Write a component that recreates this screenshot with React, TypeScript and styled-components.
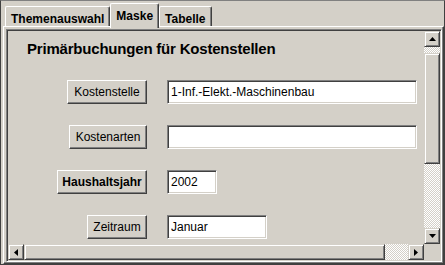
import React from "react";
import styled, { createGlobalStyle } from "styled-components";

const BG = "#d4d0c8";
const FONT = `"Liberation Sans", Arial, sans-serif`;

const Global = createGlobalStyle`
  html, body { margin: 0; padding: 0; background: ${BG}; }
  body { font-family: ${FONT}; }
`;

const Window = styled.div`
  box-sizing: border-box;
  width: 445px;
  height: 265px;
  background: ${BG};
  border: 1px solid #404040;
  border-top-color: #808080;
  padding: 1px 0 0 2px;
  display: flex;
  flex-direction: column;
  overflow: hidden;
`;

const TabStrip = styled.div`
  flex: none;
  height: 24px;
  display: flex;
  align-items: flex-end;
  padding-left: 2px;
  position: relative;
  z-index: 1;
`;

const Tab = styled.div<{ $active?: boolean }>`
  box-sizing: border-box;
  height: ${(p) => (p.$active ? 25 : 20)}px;
  margin-bottom: ${(p) => (p.$active ? -2 : 0)}px;
  padding: 5px 5px 0;
  font: bold 12px/14px ${FONT};
  color: #000;
  white-space: nowrap;
  background: ${BG};
  border-left: 1px solid #fff;
  border-top: 1px solid #fff;
  border-right: 1px solid #404040;
  box-shadow: inset -1px 0 #808080;
  border-radius: 2px 2px 0 0;
`;

const Panel = styled.div`
  flex: 1;
  min-height: 0;
  display: flex;
  border: 1px solid;
  border-color: #fff #404040 #404040 #fff;
  box-shadow: inset -1px -1px #808080;
  padding: 2px 1px 1px 2px;
`;

const ScrollPane = styled.div`
  flex: 1;
  min-width: 0;
  display: grid;
  grid-template-columns: 1fr 16px;
  grid-template-rows: 1fr 16px;
  border: 1px solid;
  border-color: #808080 #fff #fff #808080;
  box-shadow: inset 1px 1px #404040, inset -1px -1px ${BG};
  padding: 1px;
`;

const Viewport = styled.div`
  overflow: hidden;
  min-width: 0;
  min-height: 0;
  background: ${BG};
`;

const Content = styled.div`
  padding: 9px 0 0 19px;
  width: 442px;
`;

const Title = styled.h1`
  margin: 0;
  font: bold 15px/17px ${FONT};
  letter-spacing: -0.2px;
  color: #000;
  white-space: nowrap;
`;

const Form = styled.div`
  margin-top: 23px;
  display: grid;
  grid-template-columns: 120px auto;
  column-gap: 20px;
  row-gap: 21px;
  align-items: center;
  justify-items: start;
`;

const FieldButton = styled.button<{ $bold?: boolean; $w: number }>`
  justify-self: end;
  box-sizing: border-box;
  width: ${(p) => p.$w}px;
  height: 24px;
  margin: 0;
  padding: 0;
  background: ${BG};
  border: 1px solid;
  border-color: #fff #404040 #404040 #fff;
  box-shadow: inset -1px -1px #808080;
  border-radius: 0;
  font: ${(p) => (p.$bold ? "bold" : "normal")} 12px ${FONT};
  color: #000;
  white-space: nowrap;
`;

const TextField = styled.input<{ $w: number }>`
  box-sizing: border-box;
  width: ${(p) => p.$w}px;
  height: 24px;
  margin: 0;
  padding: 0 3px;
  background: #fff;
  border: 1px solid;
  border-color: #808080 #fff #fff #808080;
  box-shadow: inset 1px 1px #404040, inset -1px -1px ${BG};
  border-radius: 0;
  font: 12px ${FONT};
  color: #000;
  outline: none;
`;

const VBar = styled.div`
  display: flex;
  flex-direction: column;
  min-height: 0;
`;

const HBar = styled.div`
  display: flex;
  min-width: 0;
`;

const Corner = styled.div`
  background: ${BG};
`;

const ArrowButton = styled.div`
  box-sizing: border-box;
  flex: none;
  width: 16px;
  height: 16px;
  background: ${BG};
  border: 1px solid;
  border-color: ${BG} #404040 #404040 ${BG};
  box-shadow: inset 1px 1px #fff, inset -1px -1px #808080;
  display: flex;
  align-items: center;
  justify-content: center;
`;

const Track = styled.div<{ $vertical?: boolean }>`
  flex: 1;
  display: flex;
  flex-direction: ${(p) => (p.$vertical ? "column" : "row")};
  background: repeating-conic-gradient(#fff 0 25%, ${BG} 0 50%) 0 0 / 2px 2px;
  min-width: 0;
  min-height: 0;
`;

const Thumb = styled.div<{ $vertical?: boolean; $offset: number; $size: number }>`
  box-sizing: border-box;
  flex: none;
  ${(p) =>
    p.$vertical
      ? `margin-top: ${p.$offset}px; height: ${p.$size}px; width: 16px;`
      : `margin-left: ${p.$offset}px; width: ${p.$size}px; height: 16px;`}
  background: ${BG};
  border: 1px solid;
  border-color: ${BG} #404040 #404040 ${BG};
  box-shadow: inset 1px 1px #fff, inset -1px -1px #808080;
`;

type Dir = "up" | "down" | "left" | "right";
const Arrow: React.FC<{ dir: Dir }> = ({ dir }) => {
  const vertical = dir === "up" || dir === "down";
  const w = vertical ? 7 : 4;
  const h = vertical ? 4 : 7;
  const pts: Record<Dir, string> = {
    up: "3.5,0 7,4 0,4",
    down: "0,0 7,0 3.5,4",
    left: "4,0 4,7 0,3.5",
    right: "0,0 4,3.5 0,7",
  };
  return (
    <svg width={w} height={h} viewBox={`0 0 ${w} ${h}`}>
      <polygon points={pts[dir]} fill="#000" />
    </svg>
  );
};

const rows = [
  { label: "Kostenstelle", w: 80, value: "1-Inf.-Elekt.-Maschinenbau", fw: 250 },
  { label: "Kostenarten", w: 78, value: "", fw: 250 },
  { label: "Haushaltsjahr", w: 90, value: "2002", fw: 50, bold: true },
  { label: "Zeitraum", w: 60, value: "Januar", fw: 100 },
];

export default function App() {
  return (
    <>
      <Global />
      <Window>
        <TabStrip>
          <Tab>Themenauswahl</Tab>
          <Tab $active>Maske</Tab>
          <Tab>Tabelle</Tab>
        </TabStrip>
        <Panel>
          <ScrollPane>
            <Viewport>
              <Content>
                <Title>Primärbuchungen für Kostenstellen</Title>
                <Form>
                  {rows.map((r) => (
                    <React.Fragment key={r.label}>
                      <FieldButton $w={r.w} $bold={r.bold}>
                        {r.label}
                      </FieldButton>
                      <TextField $w={r.fw} value={r.value} readOnly />
                    </React.Fragment>
                  ))}
                </Form>
              </Content>
            </Viewport>
            <VBar>
              <ArrowButton>
                <Arrow dir="up" />
              </ArrowButton>
              <Track $vertical>
                <Thumb $vertical $offset={6} $size={111} />
              </Track>
              <ArrowButton>
                <Arrow dir="down" />
              </ArrowButton>
            </VBar>
            <HBar>
              <ArrowButton>
                <Arrow dir="left" />
              </ArrowButton>
              <Track>
                <Thumb $offset={0} $size={361} />
              </Track>
              <ArrowButton>
                <Arrow dir="right" />
              </ArrowButton>
            </HBar>
            <Corner />
          </ScrollPane>
        </Panel>
      </Window>
    </>
  );
}
